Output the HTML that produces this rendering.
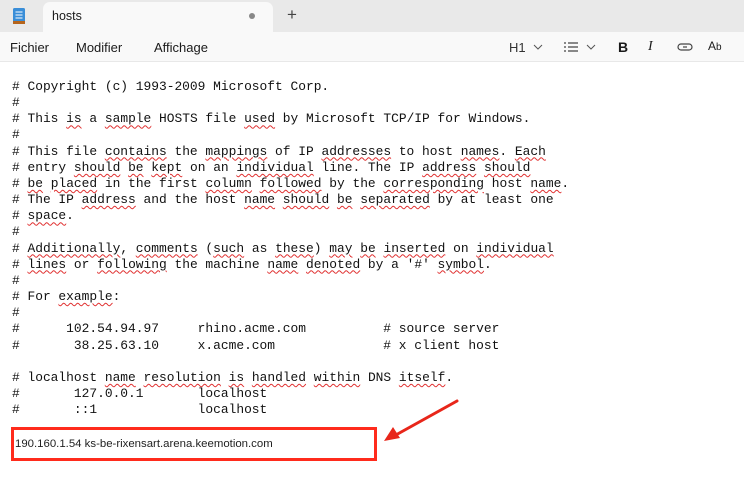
<!DOCTYPE html>
<html><head><meta charset="utf-8"><style>
*{margin:0;padding:0;box-sizing:border-box}
body{width:744px;height:480px;background:#fff;position:relative;overflow:hidden;font-family:"Liberation Sans",sans-serif}
.tabbar{position:absolute;left:0;top:0;width:744px;height:32px;background:#e9e9e9}
.tab{position:absolute;left:43px;top:2px;width:230px;height:30px;background:#f9f9f9;border-radius:7px 7px 0 0}
.toolbar{position:absolute;left:0;top:32px;width:744px;height:30px;background:#f9f9f9;border-bottom:1px solid #e8e8e8}
.t{position:absolute;font-size:13px;color:#1a1a1a}
pre{position:absolute;left:12px;top:79px;font-family:"Liberation Mono",monospace;font-size:12.9px;line-height:16.15px;color:#111}
u{text-decoration:underline wavy #e03030;text-decoration-thickness:1px;text-underline-offset:2px}
.box{position:absolute;left:11px;top:427px;width:366px;height:34px;border:3px solid #ff2b1c;background:#fff}
.box span{position:absolute;left:1px;top:8px;font-size:11.4px;color:#222}
</style></head><body>
<div class="tabbar"></div>
<div class="tab"></div>
<svg style="position:absolute;left:12px;top:7px" width="14" height="18" viewBox="0 0 14 18"><rect x="1" y="1" width="12" height="15" rx="1.5" fill="#3a8ed8"/><rect x="1" y="14" width="12" height="3" fill="#b5651d"/><path d="M3.5 5h7M3.5 8h7M3.5 11h7" stroke="#fff" stroke-width="1"/></svg>
<div class="t" style="left:52px;top:9px;font-size:12.5px">hosts</div>
<div style="position:absolute;left:249px;top:13px;width:6px;height:6px;border-radius:50%;background:#888"></div>
<div class="t" style="left:287px;top:5px;font-size:17px;color:#444">+</div>
<div class="toolbar"></div>
<div class="t" style="left:10px;top:40px">Fichier</div>
<div class="t" style="left:76px;top:40px">Modifier</div>
<div class="t" style="left:154px;top:40px">Affichage</div>
<div class="t" style="left:509px;top:40px;color:#333">H1</div>
<svg style="position:absolute;left:533px;top:43px" width="10" height="8"><path d="M1 2l4 4 4-4" stroke="#555" fill="none"/></svg>
<svg style="position:absolute;left:563px;top:41px" width="16" height="12"><path d="M1 2h2M5 2h10M1 6h2M5 6h10M1 10h2M5 10h10" stroke="#444" stroke-width="1.2"/></svg>
<svg style="position:absolute;left:586px;top:43px" width="10" height="8"><path d="M1 2l4 4 4-4" stroke="#555" fill="none"/></svg>
<div class="t" style="left:618px;top:39px;font-weight:bold;font-size:14px">B</div>
<div class="t" style="left:648px;top:39px;font-style:italic;font-size:14px;font-family:'Liberation Serif',serif">I</div>
<svg style="position:absolute;left:677px;top:41px" width="16" height="12"><rect x="1" y="3" width="14" height="6" rx="3" stroke="#444" fill="none" stroke-width="1.2"/><path d="M5 6h6" stroke="#f9f9f9" stroke-width="3"/><path d="M6 6h4" stroke="#444" stroke-width="1.2"/></svg>
<div class="t" style="left:708px;top:39px;font-size:12px">A<span style="font-size:10px">b</span></div>
<pre># Copyright (c) 1993-2009 Microsoft Corp.
#
# This <u>is</u> a <u>sample</u> HOSTS file <u>used</u> by Microsoft TCP/IP for Windows.
#
# This file <u>contains</u> the <u>mappings</u> of IP <u>addresses</u> to host <u>names</u>. <u>Each</u>
# entry <u>should</u> <u>be</u> <u>kept</u> on an <u>individual</u> line. The IP <u>address</u> <u>should</u>
# <u>be</u> <u>placed</u> in the first <u>column</u> <u>followed</u> by the <u>corresponding</u> host <u>name</u>.
# The IP <u>address</u> and the host <u>name</u> <u>should</u> <u>be</u> <u>separated</u> by at least one
# <u>space</u>.
#
# <u>Additionally</u>, <u>comments</u> (<u>such</u> as <u>these</u>) <u>may</u> <u>be</u> <u>inserted</u> on <u>individual</u>
# <u>lines</u> or <u>following</u> the machine <u>name</u> <u>denoted</u> by a '#' <u>symbol</u>.
#
# For <u>example</u>:
#
#      102.54.94.97     rhino.acme.com          # source server
#       38.25.63.10     x.acme.com              # x client host

# localhost <u>name</u> <u>resolution</u> <u>is</u> <u>handled</u> <u>within</u> DNS <u>itself</u>.
#       127.0.0.1       localhost
#       ::1             localhost</pre>
<div class="box"><span>190.160.1.54 ks-be-rixensart.arena.keemotion.com</span></div>
<svg style="position:absolute;left:380px;top:396px" width="84" height="50"><path d="M77 5L14 40" stroke="#e8261a" stroke-width="3" stroke-linecap="round"/><path d="M4 45L13 31L20 42Z" fill="#e8261a"/></svg>
</body></html>
